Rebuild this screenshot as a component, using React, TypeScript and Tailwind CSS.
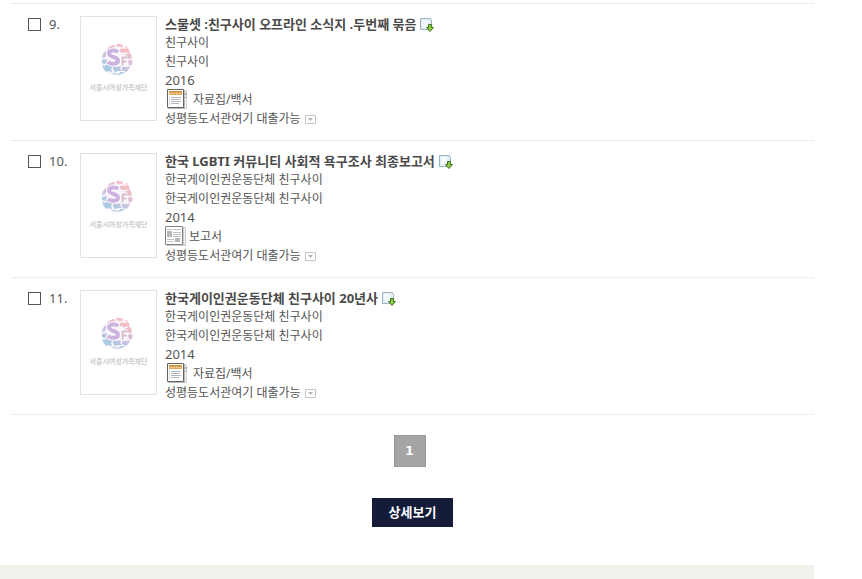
interface Book {
  no: number;
  title: string;
  author: string;
  publisher: string;
  year: string;
  type: string;
  icon: "archive" | "report";
}

const books: Book[] = [
  {
    no: 9,
    title: "스물셋 :친구사이 오프라인 소식지 .두번째 묶음",
    author: "친구사이",
    publisher: "친구사이",
    year: "2016",
    type: "자료집/백서",
    icon: "archive",
  },
  {
    no: 10,
    title: "한국 LGBTI 커뮤니티 사회적 욕구조사 최종보고서",
    author: "한국게이인권운동단체 친구사이",
    publisher: "한국게이인권운동단체 친구사이",
    year: "2014",
    type: "보고서",
    icon: "report",
  },
  {
    no: 11,
    title: "한국게이인권운동단체 친구사이 20년사",
    author: "한국게이인권운동단체 친구사이",
    publisher: "한국게이인권운동단체 친구사이",
    year: "2014",
    type: "자료집/백서",
    icon: "archive",
  },
];

function ArchiveIcon() {
  return (
    <svg width="26" height="21" viewBox="0 0 26 21" aria-hidden="true">
      <path d="M5.5 1.500h16v18h-16z" fill="#f4f4f4" stroke="#d4d4d4" />
      <path d="M21 4v2M21 8v1" stroke="#777" />
      <path d="M2.5.500h16v18h-16z" fill="#fff" stroke="#6a6262" />
      <path d="M19.500 1v18.500H3" fill="none" stroke="#b9b9b9" />
      <path d="M4 2h13v4H4z" fill="#dda85a" />
      <path d="M4 2h13v1H4z" fill="#c98f3c" />
      <path d="M5 4.500h11" stroke="#f0d09a" strokeDasharray="2 1" />
      <path d="M6 8.500h10M6 10.500h9M6 12.500h10M6 14.500h8" stroke="#b4b4bc" />
      <path d="M4.500 8v9" stroke="#dcdce4" />
    </svg>
  );
}

function ReportIcon() {
  return (
    <svg width="22" height="21" viewBox="0 0 22 21" aria-hidden="true">
      <path d="M4.500 1.500h16v18h-16z" fill="#f2f2f2" stroke="#c8c8c8" />
      <path d="M.500.500h17v18H.500z" fill="#fff" stroke="#808080" />
      <path d="M18.500 1v18.500H2" fill="none" stroke="#cdcdcd" />
      <path d="M2 3.500h5M8 3.500h8" stroke="#c0c0c0" />
      <path d="M2 5h5v6H2zM10 12h5v4h-5z" fill="#b8b8b8" />
      <path d="M8 6.500h8M8 8.500h8M8 10.500h8M2 13.500h7M2 15.500h7" stroke="#c0c0c0" />
    </svg>
  );
}

function SaveIcon() {
  return (
    <svg width="14" height="14" viewBox="0 0 14 14" aria-hidden="true">
      <path d="M.5.500h10l1 2v9H.500z" fill="#e3eef5" stroke="#9db3c2" />
      <path d="M2 2h6v8H2z" fill="#f3f9fc" />
      <path d="M8.500 6.500h3v3h2L10 13.500 6.500 9.500h2z" fill="#8fca3f" stroke="#3c7520" />
    </svg>
  );
}

function ToggleIcon() {
  return (
    <svg width="11" height="9" viewBox="0 0 11 9" aria-hidden="true">
      <path d="M.5.5h10v8H.5z" fill="#fff" stroke="#c4c4c4" />
      <path d="M3 3h5L5.500 6z" fill="#b4b4b4" />
    </svg>
  );
}

function FoundationLogo() {
  return (
    <svg width="36" height="34" viewBox="0 0 36 34" aria-hidden="true">
      <defs>
        <linearGradient id="globe" gradientUnits="userSpaceOnUse" x1="25" y1="3" x2="9" y2="30">
          <stop offset="0.100" stopColor="#f5bcc0" />
          <stop offset="0.500" stopColor="#d6c0de" />
          <stop offset="0.850" stopColor="#abcbe4" />
        </linearGradient>
      </defs>
      <circle cx="16" cy="17" r="15.500" fill="#f8f3f9" />
      <g fill="url(#globe)">
        <path d="M7 5q3-3 6-3l1 2-4 2-4 2zM15 1q4-.5 7 1l-1 2-5-.5z" />
        <path d="M19 6q3-1 5 0l3-1q2 2 1 4l-5 1-4-1zM24 3l3 1-2 1z" />
        <path d="M28 9q3 3 3 6l-3 1-3-2-2-2 3-1z" />
        <path d="M5 8l1 3-2 3-3 1q0-4 4-7zM1 17l4-1 1 2-2 3-3-1z" />
        <path d="M1 22l3 1 2-3 2 3 4 0-2 3 1 3-4-1-2 1q-3-3-4-7z" />
        <path d="M12 23l4 1 4-1-1 3 2 2-4 0-3 1-2-3z" />
        <path d="M10 30l3 0 4 1 3-2 4 0q-6 5-14 1zM21 24l5 0 3-1q-1 4-4 6l-4-2z" />
        <path d="M28 17l3 0q1 2 0 5l-3 0-1-3z" />
      </g>
      <g fill="none">
        <path d="M17 9c-2-2.500-9-2-9 1.500 0 4 9 3 9 7 0 4-7 4-10 1.500" stroke="#fff" strokeWidth="6" />
        <path d="M17 9c-2-2.500-9-2-9 1.500 0 4 9 3 9 7 0 4-7 4-10 1.500" stroke="#cdb3df" strokeWidth="4" />
        <path d="M21.500 22.500v-8h5M21.500 18.500h4" stroke="#fff" strokeWidth="4" />
        <path d="M21.500 22.500v-8h5M21.500 18.500h4" stroke="#dcb9d2" strokeWidth="2" />
      </g>
    </svg>
  );
}

function BookItem({ book }: { book: Book }) {
  const id = `book-${book.no}`;

  return (
    <li className="flex items-start border-b border-dotted border-[#dcdcdc] py-3 pl-[17px]">
      <div className="flex w-[52px] shrink-0 items-center gap-2 leading-[17px]">
        <input
          id={id}
          type="checkbox"
          className="h-[13px] w-[13px] shrink-0 appearance-none border border-[#555] bg-white checked:bg-[#555]"
        />
        <label htmlFor={id} className="text-[13px] leading-[17px]">
          {book.no}.
        </label>
      </div>
      <a
        href="#"
        className="mr-2 flex h-[105px] w-[77px] shrink-0 flex-col items-center border border-[#e2e2e2] pt-[26px]"
      >
        <FoundationLogo />
        <span className="mt-1 text-[7px] leading-[14px] font-bold whitespace-nowrap text-[#ccc]">
          서울시여성가족재단
        </span>
      </a>
      <div className="min-w-0 flex-1 text-xs leading-[19px]">
        <div className="flex h-[17px] items-center gap-1">
          <a href="#" className="text-[13px] leading-[17px] font-bold text-[#4a4a4a]">
            {book.title}
          </a>
          <button type="button" aria-label="저장">
            <SaveIcon />
          </button>
        </div>
        <p>{book.author}</p>
        <p>{book.publisher}</p>
        <p className="text-[13px] leading-[18px]">{book.year}</p>
        <div className="flex h-[21px] items-center gap-[2px]">
          {book.icon === "archive" ? <ArchiveIcon /> : <ReportIcon />}
          <span>{book.type}</span>
        </div>
        <button type="button" className="flex items-center gap-1 leading-[18px]">
          성평등도서관여기 대출가능
          <ToggleIcon />
        </button>
      </div>
    </li>
  );
}

export default function App() {
  return (
    <div className="min-h-screen bg-white pr-12 font-['Noto_Sans','Noto_Sans_CJK_KR',sans-serif] text-[#555]">
      <main className="pt-[3px] pl-[11px]">
        <ul className="border-t border-dotted border-[#dcdcdc]">
          {books.map((book) => (
            <BookItem key={book.no} book={book} />
          ))}
        </ul>
        <nav className="mt-5 flex justify-center pr-1.5">
          <a
            href="#"
            aria-current="page"
            className="flex h-8 w-8 items-center justify-center border border-[#999] bg-[#a5a5a5] font-['DejaVu_Sans',sans-serif] text-xs font-bold text-white"
          >
            1
          </a>
        </nav>
        <div className="mt-[31px] flex justify-center">
          <button type="button" className="h-[29px] bg-[#141c3a] px-[17px] text-[13px] font-bold text-white">
            상세보기
          </button>
        </div>
      </main>
      <footer className="mt-[38px] h-[14px] bg-[#f1f2eb]" />
    </div>
  );
}
